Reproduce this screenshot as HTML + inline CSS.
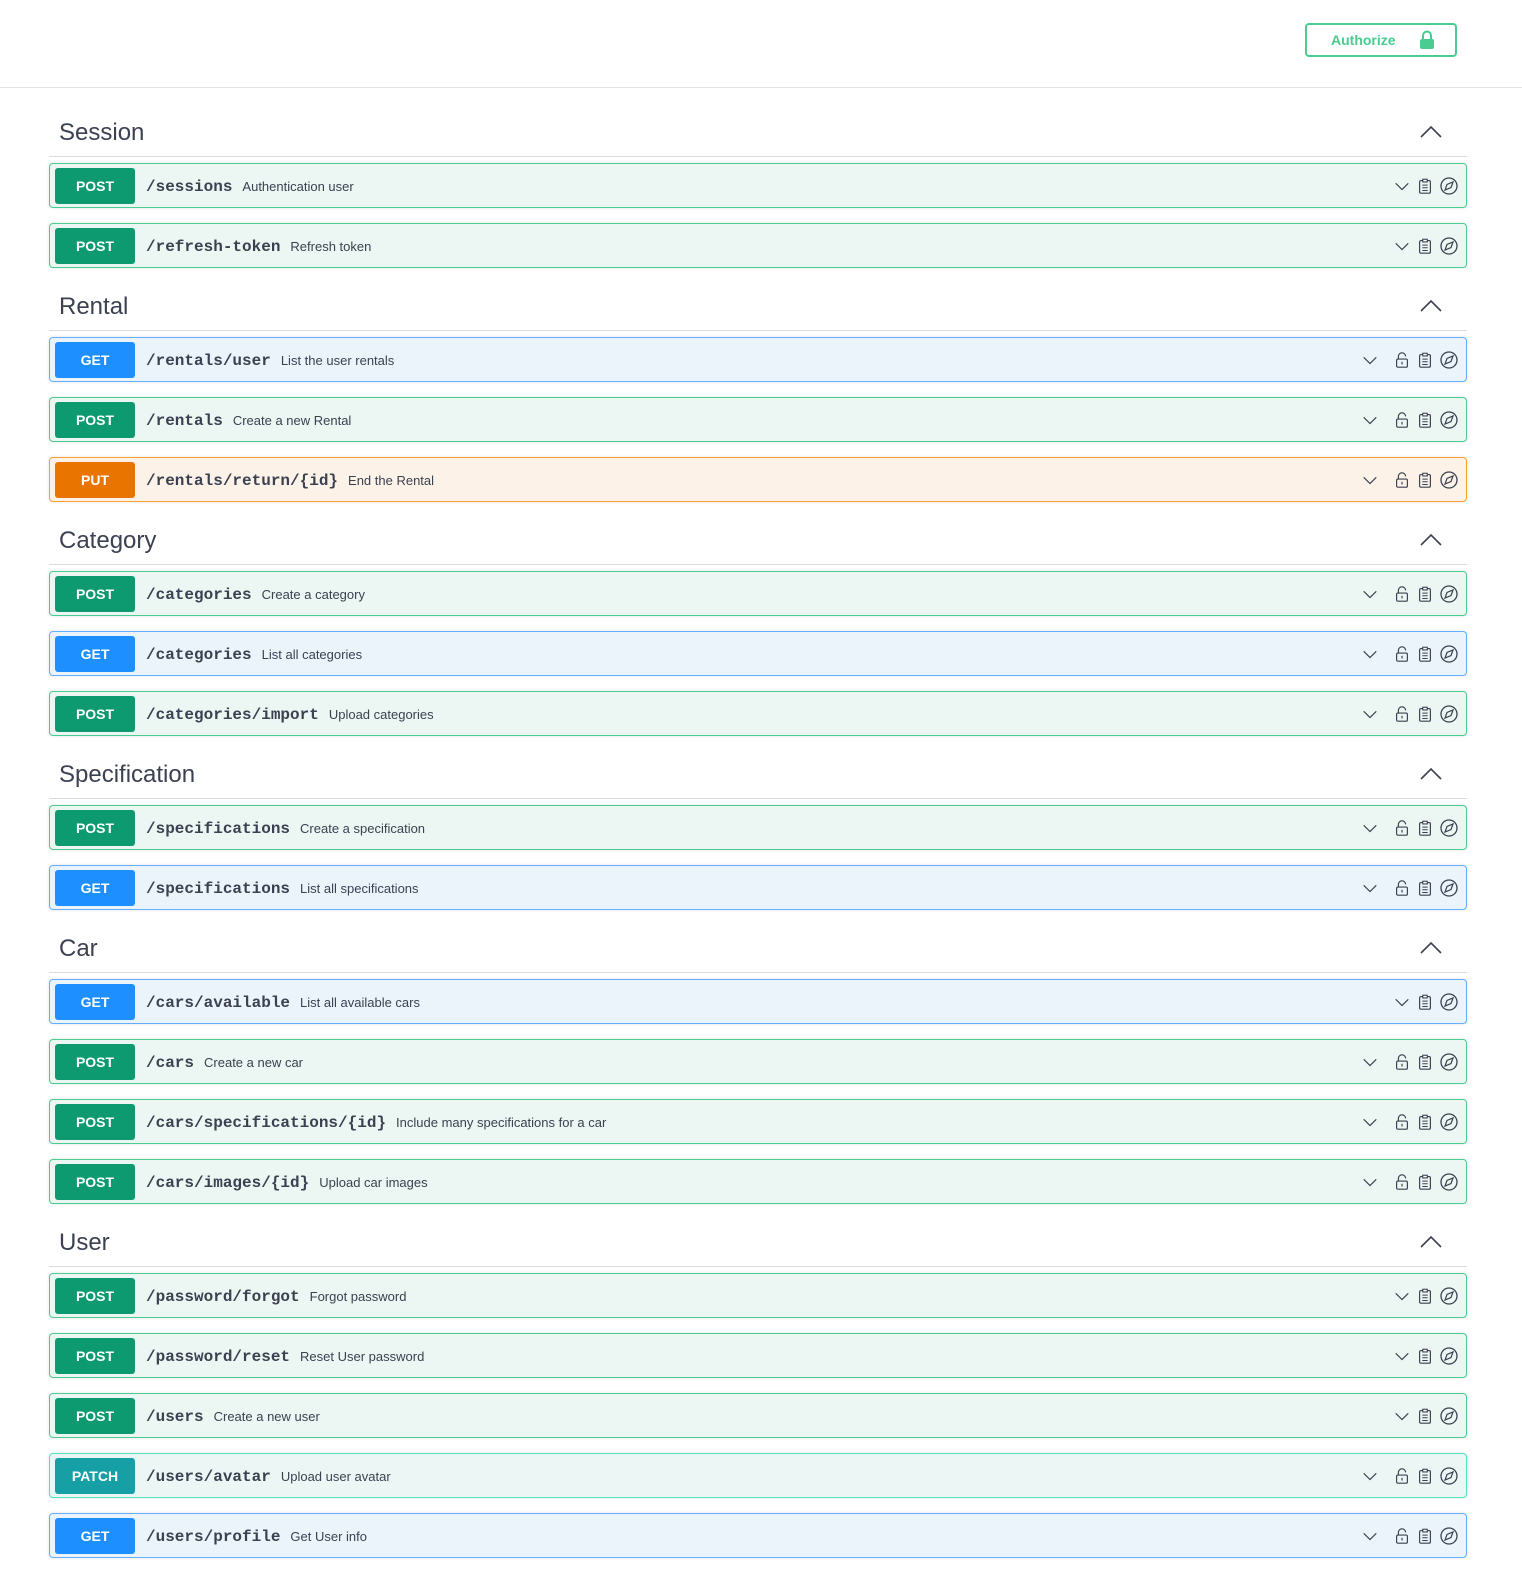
<!DOCTYPE html>
<html><head><meta charset="utf-8"><style>
*{box-sizing:border-box;margin:0;padding:0}
body{width:1522px;height:1570px;background:#fff;font-family:"Liberation Sans",sans-serif;color:#3b4151;overflow:hidden;position:relative}
.top{position:absolute;left:0;top:0;width:1522px;height:88px;border-bottom:1px solid #e4e4e4}
.auth{position:absolute;left:1305px;top:23px;width:152px;height:34px;border:2px solid #49cc90;border-radius:4px;color:#49cc90;font-weight:bold;font-size:14px;display:flex;align-items:center;padding-left:24px}
.auth svg{margin-left:22px}
.wrap{position:absolute;left:49px;top:109px;width:1418px}
.sec{height:48px;border-bottom:1px solid #d9dcdf;position:relative;margin-bottom:6px}
.sec h3{font-weight:normal;font-size:24px;position:absolute;left:10px;top:10px;color:#3b4151}
.sec svg{position:absolute;left:1371px;top:16px}
.op{height:45px;border:1px solid;border-radius:4px;margin-bottom:15px;display:flex;align-items:center;padding-left:5px;position:relative;box-shadow:0 0 3px rgba(0,0,0,.12)}
.m{width:80px;height:36px;border-radius:3px;color:#fff;font-weight:bold;font-size:14px;display:flex;align-items:center;justify-content:center;flex:none}
.p{font-family:"Liberation Mono",monospace;font-weight:bold;font-size:16px;margin-left:11px;color:#3b4151;position:relative;top:1px}
.d{font-size:13px;margin-left:10px;color:#3b4151;position:relative;top:1px}
.ic svg{position:absolute;top:12px}
.ic .c1{left:1311px}.ic .c2{left:1343px}.ic .c3{left:1366px}.ic .c4{left:1389px}
.post{background:#ecf6f2;border-color:#49cc90}.post .m{background:#0e9a70}
.get{background:#ebf3fb;border-color:#61affe}.get .m{background:#1e8fff}
.put{background:#fcf2e8;border-color:#fca130}.put .m{background:#e97500}
.patch{background:#ecf7f5;border-color:#50e3c2}.patch .m{background:#16a0a6}
</style></head><body>
<svg width="0" height="0" style="position:absolute"><defs>
<symbol id="ch" viewBox="0 0 20 20"><path d="M3 7l7 7 7-7" fill="none" stroke="#3b4151" stroke-width="1.3"/></symbol>
<symbol id="lk" viewBox="0 0 20 20"><path d="M6 9V6a4 4 0 0 1 8 0" fill="none" stroke="#3b4151" stroke-width="1.3"/><rect x="4" y="9" width="12" height="9" rx="1.5" fill="none" stroke="#3b4151" stroke-width="1.3"/><path d="M10 12v3" stroke="#3b4151" stroke-width="1.3"/></symbol>
<symbol id="cb" viewBox="0 0 20 20"><rect x="4" y="4" width="12" height="14" rx="1.5" fill="none" stroke="#3b4151" stroke-width="1.3"/><rect x="7.5" y="2.5" width="5" height="3" fill="#fff" stroke="#3b4151" stroke-width="1.2"/><path d="M7 9h6M7 12h6M7 15h6" stroke="#3b4151" stroke-width="1.1"/></symbol>
<symbol id="cp" viewBox="0 0 20 20"><circle cx="10" cy="10" r="8" fill="none" stroke="#3b4151" stroke-width="1.3"/><path d="M14 6l-2 5.5L6 14l2-5.5z" fill="none" stroke="#3b4151" stroke-width="1.2"/></symbol>
</defs></svg>
<div class="top"><div class="auth">Authorize <svg width="18" height="20" viewBox="0 0 18 20"><path d="M5 9V5.5a4 4 0 0 1 8 0V9" fill="none" stroke="#49cc90" stroke-width="2"/><rect x="2" y="9" width="14" height="10" rx="2" fill="#49cc90"/></svg></div></div>
<div class="wrap">

<div class="sec"><h3>Session</h3><svg width="22" height="14" viewBox="0 0 22 14"><path d="M1 12L11 2l10 10" fill="none" stroke="#3b4151" stroke-width="1.6"/></svg></div>
<div class="op post"><span class="m">POST</span><span class="p">/sessions</span><span class="d">Authentication user</span><div class="ic"><svg class="c2" width="18" height="20"><use href="#ch"/></svg><svg class="c3" width="18" height="20"><use href="#cb"/></svg><svg class="c4" width="20" height="20"><use href="#cp"/></svg></div></div>
<div class="op post"><span class="m">POST</span><span class="p">/refresh-token</span><span class="d">Refresh token</span><div class="ic"><svg class="c2" width="18" height="20"><use href="#ch"/></svg><svg class="c3" width="18" height="20"><use href="#cb"/></svg><svg class="c4" width="20" height="20"><use href="#cp"/></svg></div></div>

<div class="sec"><h3>Rental</h3><svg width="22" height="14" viewBox="0 0 22 14"><path d="M1 12L11 2l10 10" fill="none" stroke="#3b4151" stroke-width="1.6"/></svg></div>
<div class="op get"><span class="m">GET</span><span class="p">/rentals/user</span><span class="d">List the user rentals</span><div class="ic"><svg class="c1" width="18" height="20"><use href="#ch"/></svg><svg class="c2" width="18" height="20"><use href="#lk"/></svg><svg class="c3" width="18" height="20"><use href="#cb"/></svg><svg class="c4" width="20" height="20"><use href="#cp"/></svg></div></div>
<div class="op post"><span class="m">POST</span><span class="p">/rentals</span><span class="d">Create a new Rental</span><div class="ic"><svg class="c1" width="18" height="20"><use href="#ch"/></svg><svg class="c2" width="18" height="20"><use href="#lk"/></svg><svg class="c3" width="18" height="20"><use href="#cb"/></svg><svg class="c4" width="20" height="20"><use href="#cp"/></svg></div></div>
<div class="op put"><span class="m">PUT</span><span class="p">/rentals/return/{id}</span><span class="d">End the Rental</span><div class="ic"><svg class="c1" width="18" height="20"><use href="#ch"/></svg><svg class="c2" width="18" height="20"><use href="#lk"/></svg><svg class="c3" width="18" height="20"><use href="#cb"/></svg><svg class="c4" width="20" height="20"><use href="#cp"/></svg></div></div>

<div class="sec"><h3>Category</h3><svg width="22" height="14" viewBox="0 0 22 14"><path d="M1 12L11 2l10 10" fill="none" stroke="#3b4151" stroke-width="1.6"/></svg></div>
<div class="op post"><span class="m">POST</span><span class="p">/categories</span><span class="d">Create a category</span><div class="ic"><svg class="c1" width="18" height="20"><use href="#ch"/></svg><svg class="c2" width="18" height="20"><use href="#lk"/></svg><svg class="c3" width="18" height="20"><use href="#cb"/></svg><svg class="c4" width="20" height="20"><use href="#cp"/></svg></div></div>
<div class="op get"><span class="m">GET</span><span class="p">/categories</span><span class="d">List all categories</span><div class="ic"><svg class="c1" width="18" height="20"><use href="#ch"/></svg><svg class="c2" width="18" height="20"><use href="#lk"/></svg><svg class="c3" width="18" height="20"><use href="#cb"/></svg><svg class="c4" width="20" height="20"><use href="#cp"/></svg></div></div>
<div class="op post"><span class="m">POST</span><span class="p">/categories/import</span><span class="d">Upload categories</span><div class="ic"><svg class="c1" width="18" height="20"><use href="#ch"/></svg><svg class="c2" width="18" height="20"><use href="#lk"/></svg><svg class="c3" width="18" height="20"><use href="#cb"/></svg><svg class="c4" width="20" height="20"><use href="#cp"/></svg></div></div>

<div class="sec"><h3>Specification</h3><svg width="22" height="14" viewBox="0 0 22 14"><path d="M1 12L11 2l10 10" fill="none" stroke="#3b4151" stroke-width="1.6"/></svg></div>
<div class="op post"><span class="m">POST</span><span class="p">/specifications</span><span class="d">Create a specification</span><div class="ic"><svg class="c1" width="18" height="20"><use href="#ch"/></svg><svg class="c2" width="18" height="20"><use href="#lk"/></svg><svg class="c3" width="18" height="20"><use href="#cb"/></svg><svg class="c4" width="20" height="20"><use href="#cp"/></svg></div></div>
<div class="op get"><span class="m">GET</span><span class="p">/specifications</span><span class="d">List all specifications</span><div class="ic"><svg class="c1" width="18" height="20"><use href="#ch"/></svg><svg class="c2" width="18" height="20"><use href="#lk"/></svg><svg class="c3" width="18" height="20"><use href="#cb"/></svg><svg class="c4" width="20" height="20"><use href="#cp"/></svg></div></div>

<div class="sec"><h3>Car</h3><svg width="22" height="14" viewBox="0 0 22 14"><path d="M1 12L11 2l10 10" fill="none" stroke="#3b4151" stroke-width="1.6"/></svg></div>
<div class="op get"><span class="m">GET</span><span class="p">/cars/available</span><span class="d">List all available cars</span><div class="ic"><svg class="c2" width="18" height="20"><use href="#ch"/></svg><svg class="c3" width="18" height="20"><use href="#cb"/></svg><svg class="c4" width="20" height="20"><use href="#cp"/></svg></div></div>
<div class="op post"><span class="m">POST</span><span class="p">/cars</span><span class="d">Create a new car</span><div class="ic"><svg class="c1" width="18" height="20"><use href="#ch"/></svg><svg class="c2" width="18" height="20"><use href="#lk"/></svg><svg class="c3" width="18" height="20"><use href="#cb"/></svg><svg class="c4" width="20" height="20"><use href="#cp"/></svg></div></div>
<div class="op post"><span class="m">POST</span><span class="p">/cars/specifications/{id}</span><span class="d">Include many specifications for a car</span><div class="ic"><svg class="c1" width="18" height="20"><use href="#ch"/></svg><svg class="c2" width="18" height="20"><use href="#lk"/></svg><svg class="c3" width="18" height="20"><use href="#cb"/></svg><svg class="c4" width="20" height="20"><use href="#cp"/></svg></div></div>
<div class="op post"><span class="m">POST</span><span class="p">/cars/images/{id}</span><span class="d">Upload car images</span><div class="ic"><svg class="c1" width="18" height="20"><use href="#ch"/></svg><svg class="c2" width="18" height="20"><use href="#lk"/></svg><svg class="c3" width="18" height="20"><use href="#cb"/></svg><svg class="c4" width="20" height="20"><use href="#cp"/></svg></div></div>

<div class="sec"><h3>User</h3><svg width="22" height="14" viewBox="0 0 22 14"><path d="M1 12L11 2l10 10" fill="none" stroke="#3b4151" stroke-width="1.6"/></svg></div>
<div class="op post"><span class="m">POST</span><span class="p">/password/forgot</span><span class="d">Forgot password</span><div class="ic"><svg class="c2" width="18" height="20"><use href="#ch"/></svg><svg class="c3" width="18" height="20"><use href="#cb"/></svg><svg class="c4" width="20" height="20"><use href="#cp"/></svg></div></div>
<div class="op post"><span class="m">POST</span><span class="p">/password/reset</span><span class="d">Reset User password</span><div class="ic"><svg class="c2" width="18" height="20"><use href="#ch"/></svg><svg class="c3" width="18" height="20"><use href="#cb"/></svg><svg class="c4" width="20" height="20"><use href="#cp"/></svg></div></div>
<div class="op post"><span class="m">POST</span><span class="p">/users</span><span class="d">Create a new user</span><div class="ic"><svg class="c2" width="18" height="20"><use href="#ch"/></svg><svg class="c3" width="18" height="20"><use href="#cb"/></svg><svg class="c4" width="20" height="20"><use href="#cp"/></svg></div></div>
<div class="op patch"><span class="m">PATCH</span><span class="p">/users/avatar</span><span class="d">Upload user avatar</span><div class="ic"><svg class="c1" width="18" height="20"><use href="#ch"/></svg><svg class="c2" width="18" height="20"><use href="#lk"/></svg><svg class="c3" width="18" height="20"><use href="#cb"/></svg><svg class="c4" width="20" height="20"><use href="#cp"/></svg></div></div>
<div class="op get"><span class="m">GET</span><span class="p">/users/profile</span><span class="d">Get User info</span><div class="ic"><svg class="c1" width="18" height="20"><use href="#ch"/></svg><svg class="c2" width="18" height="20"><use href="#lk"/></svg><svg class="c3" width="18" height="20"><use href="#cb"/></svg><svg class="c4" width="20" height="20"><use href="#cp"/></svg></div></div>
</div>
</body></html>
